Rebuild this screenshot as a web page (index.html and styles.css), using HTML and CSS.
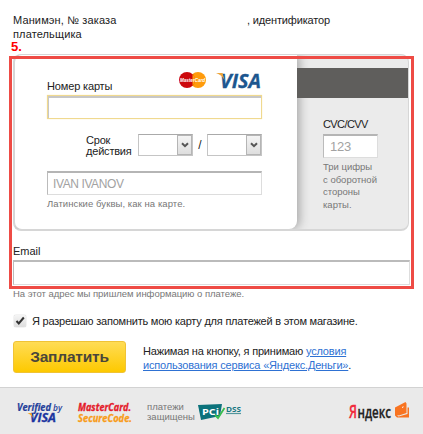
FILE: index.html
```html
<!DOCTYPE html>
<html lang="ru">
<head>
<meta charset="utf-8">
<title>Оплата</title>
<link rel="stylesheet" href="styles.css">
</head>
<body>
<main class="page">
  <header class="order">
    <div class="order-row"><span>Манимэн, № заказа</span><span class="order-id">, идентификатор</span></div>
    <div>плательщика</div>
    <b class="step">5.</b>
  </header>
  <form class="form">
    <section class="card">
      <div class="front">
        <div class="card-head">
          <label class="number-label" for="num">Номер карты</label>
          <svg class="mc" width="29" height="18" viewBox="0 0 29 18"><circle cx="20" cy="9" r="8" fill="#ff9b0b"/><circle cx="9" cy="9" r="8" fill="#cc080c"/><path d="M14.500 3a8 8 0 0 1 0 12z" fill="#ff9b0b"/><text x="2" y="11" class="mc-text" textLength="25" lengthAdjust="spacingAndGlyphs">MasterCard</text></svg>
          <svg class="visa" width="46" height="18" viewBox="0 0 46 18"><text x="4" y="15.500" class="visa-text" textLength="41" lengthAdjust="spacingAndGlyphs">VISA</text><path d="M0 1h6.500l2 7Q6 3 0 1z" fill="#eda63c"/></svg>
        </div>
        <input id="num" class="field field-number">
        <div class="expiry">
          <span class="expiry-label">Срок<br>действия</span>
          <span class="select"><i><svg width="8" height="6" viewBox="0 0 8 6"><path d="M1 1.2L4 4.2L7 1.2"/></svg></i></span>
          <span class="slash">/</span>
          <span class="select"><i><svg width="8" height="6" viewBox="0 0 8 6"><path d="M1 1.2L4 4.2L7 1.2"/></svg></i></span>
        </div>
        <input class="field field-name" placeholder="IVAN IVANOV">
        <div class="hint hint-name">Латинские буквы, как на карте.</div>
      </div>
      <div class="back">
        <div class="stripe"></div>
        <div class="code">
          <label class="code-label" for="cvc">CVC/CVV</label>
          <input id="cvc" class="field field-code" placeholder="123">
          <div class="hint hint-code">Три цифры<br>с оборотной<br>стороны<br>карты.</div>
        </div>
      </div>
    </section>
    <label class="email-label" for="email">Email</label>
    <input id="email" class="field field-email">
    <div class="frame"></div>
  </form>
  <div class="hint hint-email">На этот адрес мы пришлем информацию о платеже.</div>
  <div class="remember">
    <span class="check"><svg width="12" height="12" viewBox="0 0 12 12"><path d="M2.500 6L4.800 8.500L9.800 2.500"/></svg></span>
    <span class="remember-text">Я разрешаю запомнить мою карту для платежей в этом магазине.</span>
  </div>
  <div class="submit">
    <button class="pay" type="button">Заплатить</button>
    <div class="terms"><div class="terms-a">Нажимая на кнопку, я принимаю <a>условия</a></div><div class="terms-b"><a>использования сервиса «Яндекс.Деньги»</a>.</div></div>
  </div>
</main>
<footer class="footer">
  <svg class="vbv" width="46" height="22" viewBox="0 0 46 22"><text class="vbv-a" x="0" y="9" textLength="34" lengthAdjust="spacingAndGlyphs">Verified</text><text class="vbv-b" x="36" y="9" textLength="9" lengthAdjust="spacingAndGlyphs">by</text><text class="vbv-c" x="13" y="20" textLength="26" lengthAdjust="spacingAndGlyphs">VISA</text><path d="M10.500 11h4l1.500 5Q13.500 12 10.500 11z" fill="#f3a62b"/></svg>
  <svg class="msc" width="55" height="22" viewBox="0 0 55 22"><text class="msc-a" x="0" y="9" textLength="53" lengthAdjust="spacingAndGlyphs">MasterCard.</text><text class="msc-b" x="0" y="20" textLength="54" lengthAdjust="spacingAndGlyphs">SecureCode.</text></svg>
  <div class="secured"><div>платежи</div><div>защищены</div></div>
  <svg class="pci" width="46" height="18" viewBox="0 0 46 18"><path d="M0 2L24 1L22 13L3 17z" fill="#0b727b"/><text class="pci-a" x="4" y="12" textLength="17" lengthAdjust="spacingAndGlyphs">PCi</text><path d="M17 12l3 3L26.500 5" fill="none" stroke="#39bd4f" stroke-width="1.800"/><text class="pci-b" x="28" y="8.500" textLength="15" lengthAdjust="spacingAndGlyphs">DSS</text><path d="M28 10.500h15" stroke="#54979d" stroke-width="1.200"/></svg>
  <svg class="yandex" width="62" height="20" viewBox="0 0 62 20"><text class="ya ya-red" x="0" y="15.500" textLength="8" lengthAdjust="spacingAndGlyphs">Я</text><text class="ya" x="8.500" y="15.500" textLength="33.500" lengthAdjust="spacingAndGlyphs">ндекс</text><path d="M46 5.500L56.500 0l1 1.500V11L50 13.500l-2-.5 1.500 1.500L58.500 12V5.500H60V15.500H48L46 13.500z" fill="#f87422"/><path d="M53 5.500l1.500-.7" stroke="#fff"/></svg>
</footer>
</body>
</html>
```
FILE: styles.css
```css
* { box-sizing: border-box; }
body { margin: 0; width: 423px; height: 434px; overflow: hidden; background: #fff; color: #222; font: 11px/14px "Liberation Sans", Arial, sans-serif; display: flex; flex-direction: column; }
svg { overflow: visible; flex: none; }
.page { padding: 13px 14px 0 13px; height: 387px; flex: none; }
.order { height: 41px; position: relative; letter-spacing: .13px; }
.order-row { display: flex; }
.order-id { margin-left: auto; margin-right: 79px; letter-spacing: -.15px; }
.step { position: absolute; left: -2px; top: 27px; color: #f00; font-size: 13px; line-height: 14px; letter-spacing: 0; }
.form { position: relative; height: 232px; }
.frame { position: absolute; left: -4px; top: 2px; width: 405px; height: 233px; border: 3px solid #ee4b45; pointer-events: none; }
.card { display: flex; height: 177px; background: #ebebeb; border: 1px solid #d6d6d6; border-width: 1px 1px 2px 2px; border-radius: 8px; }
.front { width: 282px; flex: none; padding: 15px 0 0 32px; background: #fff; border-radius: 7px 0 8px 7px; box-shadow: 3px 0 10px #aaa; clip-path: inset(0 -14px 0 0); position: relative; }
.card-head { display: flex; height: 25px; }
.number-label { padding-top: 9px; width: 131px; letter-spacing: -.15px; }
.mc { margin-top: 1px; }
.mc-text { font: italic bold 5px "Liberation Sans", sans-serif; fill: #fff; }
.visa { margin: 2px 0 0 9px; }
.visa-text { font: italic bold 19.5px "Open Sans", sans-serif; fill: #1c568f; stroke: #1c568f; stroke-width: .3px; }
.field { display: block; width: 215px; height: 24px; margin: 0; padding: 0 5px; border: 1px solid #ddd; border-top: 2px solid #b5b5b5; border-left-color: #bbb; background: #fff; font: 12px "Liberation Sans", sans-serif; letter-spacing: -.4px; outline: 0; border-radius: 0; }
.field::placeholder { color: #a2a2a2; opacity: 1; }
.field-number { border: 1px solid #f0d98f; box-shadow: inset 1px 2px 0 #c7c7c7, 0 0 1px #f9e7ac; }
.expiry { display: flex; height: 22px; margin-top: 15px; padding-left: 39px; }
.expiry-label { width: 52px; line-height: 11px; letter-spacing: -.2px; padding-top: 1px; }
.select { width: 55px; height: 22px; border: 1px solid #c5c5c5; border-top-color: #aaa; display: flex; justify-content: flex-end; background: #fff; }
.select i { width: 15px; height: 20px; border: 1px solid #b5b5b5; background: linear-gradient(#f4f4f4, #dedede); display: flex; align-items: center; justify-content: center; }
.select svg { fill: none; stroke: #555; stroke-width: 2; }
.slash { width: 14px; text-align: center; line-height: 22px; font-size: 12px; }
.field-name { margin-top: 15px; }
.hint { font-size: 9.500px; line-height: 12px; color: #777; letter-spacing: 0; }
.hint-name { margin-top: 3px; letter-spacing: .07px; }
.back { flex: 1; padding-top: 13px; }
.stripe { height: 30px; background: #5f5e5c; position: relative; }
.code { padding: 19px 0 0 26px; }
.code-label { display: block; height: 17px; letter-spacing: -.6px; }
.field-code { width: 55px; height: 24px; font-size: 13px; letter-spacing: -.2px; padding-left: 6px; }
.hint-code { line-height: 12.700px; margin-top: 3px; white-space: nowrap; }
.email-label { display: block; padding-top: 13px; height: 29px; }
.field-email { width: 397px; height: 25px; border-color: #bbb #ddd #ddd #bbb; }
.hint-email { margin-top: 2px; height: 12px; letter-spacing: -.03px; }
.remember { display: flex; height: 14px; margin-top: 14px; }
.check { width: 12px; height: 12px; margin: 1px 6px 0 1px; background: linear-gradient(#f5f5f5, #ddd); border-radius: 2px; box-shadow: 0 0 1px #888; }
.check svg { display: block; fill: none; stroke: #333; stroke-width: 2; }
.remember-text { white-space: nowrap; letter-spacing: -.22px; }
.submit { display: flex; margin-top: 13px; }
.pay { width: 113px; height: 32px; padding: 0 0 1px; border: 1px solid #f0c335; border-radius: 3px; background: linear-gradient(#ffdc55, #fdc900); font: bold 15.500px "Liberation Sans", sans-serif; letter-spacing: -.2px; color: #4a463a; }
.terms { margin: 3px 0 0 17px; white-space: nowrap; letter-spacing: -.18px; }
.terms a { color: #2e71d3; text-decoration: underline; }
.footer { height: 47px; flex: none; background: #eaeaea; border-top: 1px solid #d2d2d2; display: flex; padding: 14px 0 0 17px; }
.msc { margin-left: 15px; }
.vbv-a { font: italic bold 10px "Open Sans", sans-serif; fill: #24409a; stroke: #24409a; stroke-width: .2px; }
.vbv-b { font: italic 600 9px "Open Sans", sans-serif; fill: #24409a; }
.vbv-c { font: italic bold 12px "Open Sans", sans-serif; fill: #1b35a0; stroke: #1b35a0; stroke-width: .3px; }
.msc-a, .msc-b { font: italic bold 10px "Open Sans", sans-serif; fill: #e41b2b; stroke: #e41b2b; stroke-width: .3px; }
.msc-b { fill: #f89c19; stroke: #f89c19; }
.secured { width: 51px; margin-left: 14px; font-size: 9.500px; line-height: 10px; color: #777; }
.pci { margin-top: 1px; }
.pci-a { font: bold 9px "Open Sans", sans-serif; fill: #fff; }
.pci-b { font: bold 7px "Open Sans", sans-serif; fill: #167681; }
.yandex { margin-left: 105px; }
.ya { font: 600 16px "Open Sans", sans-serif; fill: #222; stroke: #222; stroke-width: .3px; }
.ya-red { font-size: 18px; fill: #f12b3c; stroke: #f12b3c; }
```
